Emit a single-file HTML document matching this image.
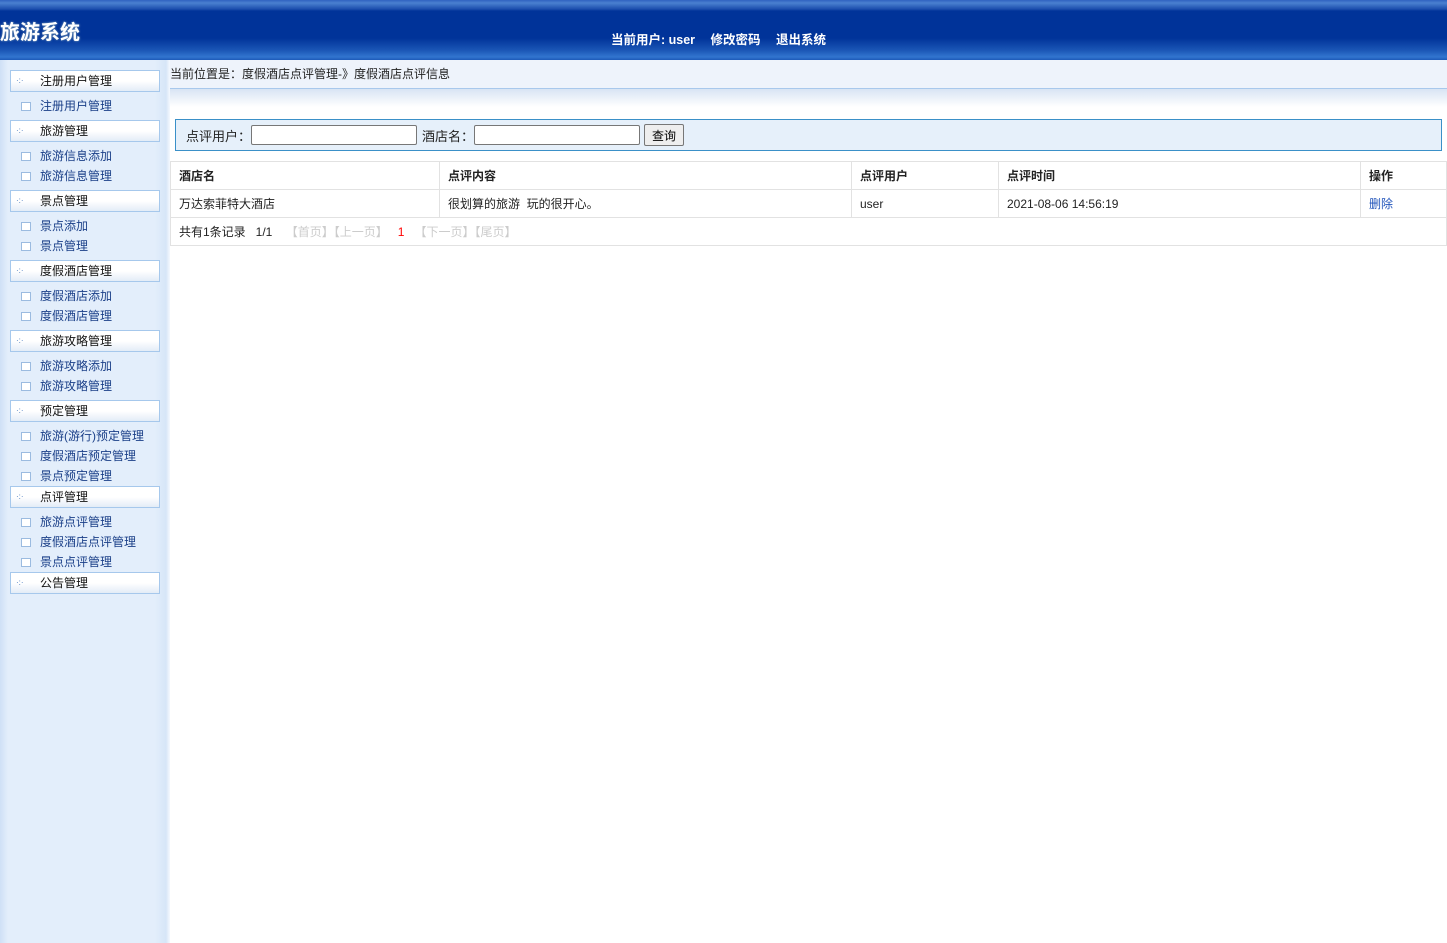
<!DOCTYPE html>
<html><head><meta charset="utf-8"><style>
*{margin:0;padding:0;box-sizing:border-box}
body{width:1447px;height:943px;position:relative;overflow:hidden;background:#fff;font-family:"Liberation Sans","Noto Sans CJK SC",sans-serif;font-size:12px;color:#222}
#hd{position:absolute;left:0;top:0;width:1447px;height:60px;background:linear-gradient(#2f62c0 0,#4a80d0 3px,#1d4fae 9px,#003399 11px,#003399 38px,#1a55b5 50px,#3275cf 57px,#1c5ab8 60px)}
#logo{position:absolute;left:0;top:16px;color:#fff;font-size:20px;font-weight:bold;text-shadow:0 0 2px #8ab}
#nav{position:absolute;left:611px;top:29px;color:#fff;font-weight:bold;font-size:12.5px}
#nav span{margin-right:12px}
#sb{position:absolute;left:0;top:60px;width:170px;height:883px;background:linear-gradient(90deg,#cfe0f6 0,#e3eefb 8px,#e3eefb 155px,#d6e6f8 166px,#f5f9fe 170px)}
.h{position:absolute;left:10px;width:150px;height:22px;border:1px solid #a6c8ec;background:linear-gradient(#fff 0,#fff 50%,#e3ecf7 100%);font-size:12px;line-height:20px;padding-left:29px;color:#111}
.h:before{content:"·:·";position:absolute;left:5px;top:0;font-size:8px;color:#4b7cc0}
.s{position:absolute;left:40px;font-size:12px;color:#1a3f88;line-height:14px;margin-top:1px}
.s:before{content:"";position:absolute;left:-19px;top:3px;width:8px;height:7px;border:1px solid #9bbbe0;background:#fff}
#bc{position:absolute;left:170px;top:60px;width:1277px;height:29px;background:#eef3fb;border-bottom:1px solid #a8c8ec;line-height:27px;padding-top:1px}
#gr{position:absolute;left:170px;top:89px;width:1277px;height:18px;background:linear-gradient(#d8e4f4,#fff)}
#sr{position:absolute;left:175px;top:119px;width:1267px;height:32px;border:1px solid #3a90c8;background:#e6f0fa;font-size:13px}
#sr input{position:absolute;top:5px;height:20px;border:1px solid #777;border-radius:2px;background:#fff}
#sr .l{position:absolute;top:6px}
#sr button{position:absolute;left:468px;top:4px;width:40px;height:22px;border:1px solid #777;border-radius:2px;background:#eee;font-size:12px;font-family:inherit}
table{position:absolute;left:170px;top:161px;width:1277px;border-collapse:collapse}
td{border:1px solid #e2e2e2;height:28px;padding-left:8px;font-size:12px}
th{border:1px solid #e2e2e2;height:28px;padding-left:8px;text-align:left;font-size:12px}
.g{color:#ccc}
</style></head><body>
<div id="hd"><div id="logo">旅游系统</div><div id="nav"><span>当前用户: user</span> <span>修改密码</span> <span>退出系统</span></div></div>
<div id="sb"></div>
<div class="h" style="top:70px">注册用户管理</div>
<div class="s" style="top:98px">注册用户管理</div>
<div class="h" style="top:120px">旅游管理</div>
<div class="s" style="top:148px">旅游信息添加</div>
<div class="s" style="top:168px">旅游信息管理</div>
<div class="h" style="top:190px">景点管理</div>
<div class="s" style="top:218px">景点添加</div>
<div class="s" style="top:238px">景点管理</div>
<div class="h" style="top:260px">度假酒店管理</div>
<div class="s" style="top:288px">度假酒店添加</div>
<div class="s" style="top:308px">度假酒店管理</div>
<div class="h" style="top:330px">旅游攻略管理</div>
<div class="s" style="top:358px">旅游攻略添加</div>
<div class="s" style="top:378px">旅游攻略管理</div>
<div class="h" style="top:400px">预定管理</div>
<div class="s" style="top:428px">旅游(游行)预定管理</div>
<div class="s" style="top:448px">度假酒店预定管理</div>
<div class="s" style="top:468px">景点预定管理</div>
<div class="h" style="top:486px">点评管理</div>
<div class="s" style="top:514px">旅游点评管理</div>
<div class="s" style="top:534px">度假酒店点评管理</div>
<div class="s" style="top:554px">景点点评管理</div>
<div class="h" style="top:572px">公告管理</div>
<div id="bc">当前位置是：度假酒店点评管理-》度假酒店点评信息</div>
<div id="gr"></div>
<div id="sr"><span class="l" style="left:10px">点评用户：</span><input style="left:75px;width:166px"><span class="l" style="left:246px">酒店名：</span><input style="left:298px;width:166px"><button>查询</button></div>
<table>
<tr><th style="width:269px">酒店名</th><th style="width:412px">点评内容</th><th style="width:147px">点评用户</th><th style="width:362px">点评时间</th><th>操作</th></tr>
<tr><td>万达索菲特大酒店</td><td>很划算的旅游&nbsp; 玩的很开心。</td><td>user</td><td>2021-08-06 14:56:19</td><td style="color:#2255bb">删除</td></tr>
<tr><td colspan="5">共有1条记录&nbsp;&nbsp; 1/1 &nbsp;&nbsp; <span class="g">【首页】【上一页】</span> &nbsp; <span style="color:red">1</span> &nbsp; <span class="g">【下一页】【尾页】</span></td></tr>
</table>
</body></html>
